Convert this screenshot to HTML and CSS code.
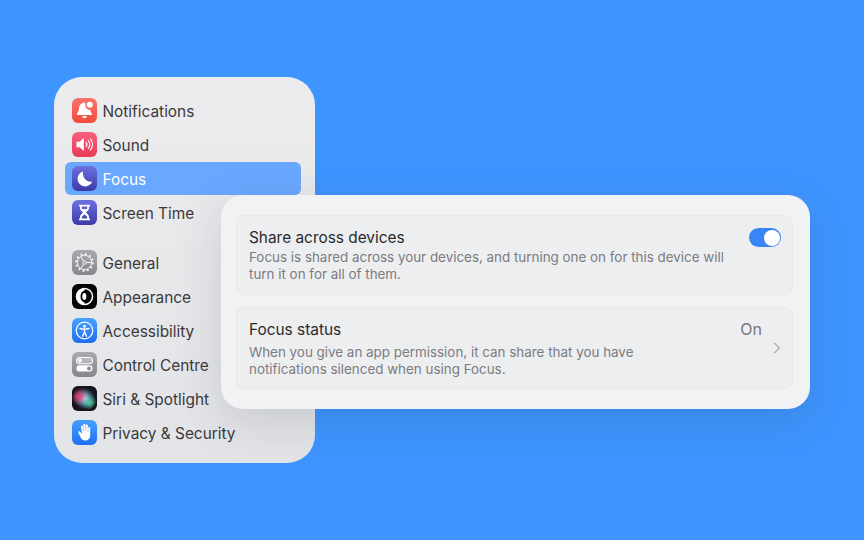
FILE: index.html
```html
<!DOCTYPE html>
<html lang="en">
<head>
<meta charset="utf-8">
<title>Focus settings</title>
<link rel="stylesheet" href="styles.css">
</head>
<body>
<svg class="defs" width="0" height="0" aria-hidden="true">
  <defs>
    <linearGradient id="g-red" x1="0" y1="0" x2="0" y2="1"><stop offset="0" stop-color="#f8746c"/><stop offset="1" stop-color="#f24a3d"/></linearGradient>
    <linearGradient id="g-pink" x1="0" y1="0" x2="0" y2="1"><stop offset="0" stop-color="#f8617b"/><stop offset="1" stop-color="#ea3a58"/></linearGradient>
    <linearGradient id="g-indigo" x1="0" y1="0" x2="0" y2="1"><stop offset="0" stop-color="#6f70e0"/><stop offset="1" stop-color="#3b3aa8"/></linearGradient>
    <linearGradient id="g-gray" x1="0" y1="0" x2="0" y2="1"><stop offset="0" stop-color="#a9a9ae"/><stop offset="1" stop-color="#86868c"/></linearGradient>
    <linearGradient id="g-blue" x1="0" y1="0" x2="0" y2="1"><stop offset="0" stop-color="#47a0ff"/><stop offset="1" stop-color="#1f6ff2"/></linearGradient>
    <radialGradient id="g-siri" cx="0.5" cy="0.5" r="0.5"><stop offset="0" stop-color="#dff0fa"/><stop offset="0.25" stop-color="#7fb6d8"/><stop offset="0.55" stop-color="#41657c"/><stop offset="0.85" stop-color="#1c1720"/><stop offset="1" stop-color="#17131a"/></radialGradient>
    <radialGradient id="g-siri-p" cx="0.28" cy="0.42" r="0.36"><stop offset="0" stop-color="#ec3f72"/><stop offset="1" stop-color="#e0406f" stop-opacity="0"/></radialGradient>
    <radialGradient id="g-siri-g" cx="0.72" cy="0.68" r="0.32"><stop offset="0" stop-color="#52d8a4" stop-opacity=".9"/><stop offset="1" stop-color="#4fd0a0" stop-opacity="0"/></radialGradient>
  </defs>
</svg>

<main class="stage">
  <nav class="sidebar">
    <ul class="group">
      <li class="row">
        <svg class="icon" viewBox="0 0 25 25"><rect width="25" height="25" rx="6" fill="url(#g-red)"/><path fill="#fff" d="M12.300 4.500c-3.100.2-5 2.400-5.200 5.600-.2 2.800-.9 4-2.100 5.300v1.600h15v-1.600c-1-1-1.500-2-1.700-3.500-3 .1-5.300-2.400-4.800-5.300-.1-1.300-.5-2-1.200-2.100z"/><circle cx="17.800" cy="6.800" r="3" fill="#fff"/><path fill="#fff" d="M10.200 18h4.600a2.300 2.300 0 0 1-4.600 0z"/></svg>
        <span class="label">Notifications</span>
      </li>
      <li class="row">
        <svg class="icon" viewBox="0 0 25 25"><rect width="25" height="25" rx="6" fill="url(#g-pink)"/><path fill="#fff" d="M4.500 9.700h3.100l4.200-3.800v13.200l-4.200-3.800h-3.100z"/><g fill="none" stroke="#fff" stroke-width="1.100" stroke-linecap="round"><path d="M14 10.300a3.400 3.400 0 0 1 0 4.400"/><path d="M16.200 8.600a6 6 0 0 1 0 7.800"/><path d="M18.400 6.900a8.600 8.600 0 0 1 0 11.200"/></g></svg>
        <span class="label">Sound</span>
      </li>
      <li class="row row-active">
        <svg class="icon" viewBox="0 0 25 25"><rect width="25" height="25" rx="6" fill="url(#g-indigo)"/><path fill="#fff" d="M11 5.500a7.600 7.600 0 1 0 9.300 10c-5.200 1.300-10.200-3.700-9.300-10z"/></svg>
        <span class="label">Focus</span>
      </li>
      <li class="row">
        <svg class="icon" viewBox="0 0 25 25"><rect width="25" height="25" rx="6" fill="url(#g-indigo)"/><path fill="#fff" d="M7 4.800h11v1.800h-1v1.600c0 1.900-2.300 3.300-3.200 4.300.9 1 3.200 2.400 3.200 4.300v1.600h1v1.800H7v-1.800h1v-1.600c0-1.900 2.300-3.300 3.200-4.300-.9-1-3.200-2.400-3.200-4.300V6.600H7zm2.800 1.800v1.500c0 .4.100.7.400 1h4.600c.3-.3.400-.6.400-1V6.600zM12.500 14.200c-.9 1-2.700 1.900-2.700 3.300v.900h5.400v-.9c0-1.400-1.800-2.300-2.700-3.300z"/></svg>
        <span class="label">Screen Time</span>
      </li>
    </ul>
    <ul class="group">
      <li class="row">
        <svg class="icon" viewBox="0 0 25 25"><rect width="25" height="25" rx="6" fill="url(#g-gray)"/><g fill="none" stroke="#fff"><circle cx="12.500" cy="12.500" r="8.400" stroke-width="1.600" stroke-dasharray="1.900 2.500"/><circle cx="12.500" cy="12.500" r="7.100" stroke-width=".9"/><circle cx="12.500" cy="12.500" r="1.700" stroke-width=".9"/><path stroke-width=".9" d="M11.600 11 9 6.600M14.200 12.500h5.400M11.600 14 9 18.400"/></g></svg>
        <span class="label">General</span>
      </li>
      <li class="row">
        <svg class="icon" viewBox="0 0 25 25"><rect width="25" height="25" rx="6" fill="#050505"/><circle cx="12.500" cy="12.500" r="8" fill="none" stroke="#fff" stroke-width="1.500"/><path fill="#fff" d="M12.500 4.500a8 8 0 0 0 0 16z"/><ellipse cx="13" cy="12.500" rx="4.500" ry="6" fill="#050505"/><ellipse cx="12.300" cy="12.500" rx="2" ry="3.400" fill="#fff"/></svg>
        <span class="label">Appearance</span>
      </li>
      <li class="row">
        <svg class="icon" viewBox="0 0 25 25"><rect width="25" height="25" rx="6" fill="url(#g-blue)"/><circle cx="12.500" cy="12.500" r="8.300" fill="none" stroke="#fff" stroke-width="1.200"/><circle cx="12.500" cy="8.200" r="1.500" fill="#fff"/><path fill="none" stroke="#fff" stroke-width="1.400" stroke-linecap="round" stroke-linejoin="round" d="M8 10.500c3 .8 6 .8 9 0M12.500 11v3.200M12.500 14l-2 4.200M12.500 14l2 4.200"/></svg>
        <span class="label">Accessibility</span>
      </li>
      <li class="row">
        <svg class="icon" viewBox="0 0 25 25"><rect width="25" height="25" rx="6" fill="url(#g-gray)"/><rect x="4.500" y="5.500" width="16" height="6.200" rx="3.100" fill="#fff" fill-opacity=".25" stroke="#fff" stroke-width="1.100"/><circle cx="8" cy="8.600" r="2" fill="#fff"/><rect x="4.500" y="13.300" width="16" height="6.200" rx="3.100" fill="#fff"/><circle cx="17" cy="16.400" r="2" fill="#8c8c92"/></svg>
        <span class="label">Control Centre</span>
      </li>
      <li class="row">
        <svg class="icon" viewBox="0 0 25 25"><rect width="25" height="25" rx="6" fill="#17131a"/><circle cx="12.500" cy="12.500" r="12" fill="url(#g-siri)"/><circle cx="12.500" cy="12.500" r="12" fill="url(#g-siri-p)"/><circle cx="12.500" cy="12.500" r="12" fill="url(#g-siri-g)"/></svg>
        <span class="label">Siri &amp; Spotlight</span>
      </li>
      <li class="row">
        <svg class="icon" viewBox="0 0 25 25"><rect width="25" height="25" rx="6" fill="url(#g-blue)"/><path fill="#fff" d="M9 6.500a1 1 0 0 1 2 0V11h.4V4.800a1 1 0 0 1 2 0V11h.4V5.600a1 1 0 0 1 2 0V12h.4V8a1 1 0 0 1 2 0v7.200c0 3.200-2.100 5.300-5 5.300-2.300 0-3.500-1-4.500-3l-2.300-4.700c-.7-1.300 1-2.200 1.800-1l1.800 2.400z"/></svg>
        <span class="label">Privacy &amp; Security</span>
      </li>
    </ul>
  </nav>

  <section class="panel">
    <div class="card card-share">
      <div class="card-text">
        <h2 class="card-title">Share across devices</h2>
        <p class="card-desc">Focus is shared across your devices, and turning one on for this device will<br>turn it on for all of them.</p>
      </div>
      <span class="toggle"><span class="knob"></span></span>
    </div>
    <div class="card card-status">
      <div class="card-text">
        <h2 class="card-title">Focus status</h2>
        <p class="card-desc card-desc-status">When you give an app permission, it can share that you have<br>notifications silenced when using Focus.</p>
      </div>
      <div class="status-side">
        <span class="status-value">On</span>
        <svg class="chevron" width="8" height="12" viewBox="0 0 8 12"><path d="M1.300 1 6.300 6l-5 5" fill="none" stroke="#b4b4b8" stroke-width="1.500"/></svg>
      </div>
    </div>
  </section>
</main>
</body>
</html>
```

FILE: styles.css
```css
* { box-sizing: border-box; }

html, body {
  margin: 0;
  height: 100%;
}

body {
  background: #3e95ff;
  font-family: Inter, "Liberation Sans", sans-serif;
  overflow: hidden;
}

.defs { position: absolute; }

.stage {
  position: relative;
  width: 864px;
  height: 540px;
  padding: 77px 0 0 54px;
}

.sidebar {
  width: 261px;
  height: 386px;
  padding: 17px 14px 0 11px;
  border-radius: 28px;
  background: linear-gradient(180deg, #ececee 0%, #e3e4e7 100%);
  display: flex;
  flex-direction: column;
  gap: 17px;
}

.group {
  list-style: none;
  margin: 0;
  padding: 0;
  display: flex;
  flex-direction: column;
  gap: 1px;
}

.row {
  height: 33px;
  padding-left: 7px;
  display: flex;
  align-items: center;
  gap: 5.5px;
  font-size: 15.4px;
  color: #3a3a3d;
  border-radius: 6px;
}

.label { padding-top: 2px; }

.row-active {
  background: #6aa8ff;
  color: #fff;
}

.icon {
  width: 25px;
  height: 25px;
  flex: none;
}

.panel {
  position: absolute;
  left: 221px;
  top: 195px;
  width: 589px;
  height: 214px;
  padding: 20px 17px 20px 15px;
  border-radius: 22px;
  background: #f1f2f4;
  box-shadow: 0 12px 48px rgba(40, 50, 70, .16);
  display: flex;
  flex-direction: column;
  gap: 12px;
}

.card {
  display: flex;
  justify-content: space-between;
  padding: 12px 11px 0 12px;
  background: #edeef0;
  border: 1px solid #e8e9eb;
  border-radius: 8px;
}

.card-share { height: 80px; }
.card-status { height: 82px; }

.card-title {
  margin: 0;
  font-size: 15.4px;
  line-height: 20px;
  font-weight: 400;
  color: #2a2a2d;
}

.card-desc {
  margin: 1px 0 0;
  font-size: 13.4px;
  line-height: 17px;
  color: #7b7b80;
}

.card-desc-status { margin-top: 4px; }

.toggle {
  width: 32px;
  height: 19px;
  padding: 1.5px;
  border-radius: 10px;
  background: #3a84f5;
  display: flex;
  justify-content: flex-end;
}

.knob {
  width: 16px;
  height: 16px;
  border-radius: 50%;
  background: #fff;
}

.status-side {
  display: flex;
  flex-direction: column;
  align-items: flex-end;
  gap: 3px;
  margin-top: -1px;
}

.status-value {
  font-size: 16px;
  line-height: 20px;
  color: #77777b;
  margin-right: 19px;
}
```
